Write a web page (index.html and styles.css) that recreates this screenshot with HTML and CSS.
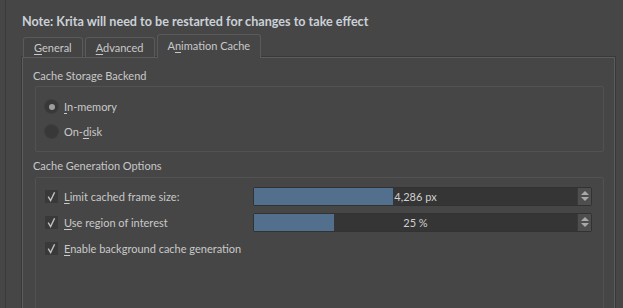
FILE: index.html
```html
<!DOCTYPE html>
<html>
<head>
<meta charset="utf-8">
<link rel="stylesheet" href="styles.css">
</head>
<body>
<div class="dialog">
  <div class="note">Note: Krita will need to be restarted for changes to take effect</div>
  <div class="tabbar">
    <div class="tab"><u>G</u>eneral</div>
    <div class="tab"><u>A</u>dvanced</div>
    <div class="tab active">A<u>n</u>imation Cache</div>
  </div>
  <div class="pane">
    <div class="group">
      <div class="group-title">Cache Storage Backend</div>
      <div class="frame frame-storage">
        <div class="opt"><span class="radio checked"></span><span><u>I</u>n-memory</span></div>
        <div class="opt"><span class="radio"></span><span>On-<u>d</u>isk</span></div>
      </div>
    </div>
    <div class="group">
      <div class="group-title">Cache Generation Options</div>
      <div class="frame frame-gen">
        <div class="row">
          <div class="opt"><span class="check"><svg viewBox="0 0 13 13" width="13" height="13"><path d="M3.2 6.6 L5.6 10.6 L9.6 2.2" fill="none" stroke="#c2c2c2" stroke-width="1.4"/></svg></span><span><u>L</u>imit cached frame size:</span></div>
          <div class="spin">
            <div class="spin-field">
              <div class="spin-fill" style="width:139px"></div>
              <span class="spin-text">4,286 px</span>
            </div>
            <div class="spin-btns"><span class="up"></span><span class="down"></span></div>
          </div>
        </div>
        <div class="row">
          <div class="opt"><span class="check"><svg viewBox="0 0 13 13" width="13" height="13"><path d="M3.2 6.6 L5.6 10.6 L9.6 2.2" fill="none" stroke="#c2c2c2" stroke-width="1.4"/></svg></span><span><u>U</u>se region of interest</span></div>
          <div class="spin">
            <div class="spin-field">
              <div class="spin-fill" style="width:80px"></div>
              <span class="spin-text">25 %</span>
            </div>
            <div class="spin-btns"><span class="up"></span><span class="down"></span></div>
          </div>
        </div>
        <div class="row row-full">
          <div class="opt"><span class="check"><svg viewBox="0 0 13 13" width="13" height="13"><path d="M3.2 6.6 L5.6 10.6 L9.6 2.2" fill="none" stroke="#c2c2c2" stroke-width="1.4"/></svg></span><span><u>E</u>nable background cache generation</span></div>
        </div>
      </div>
    </div>
  </div>
</div>
</body>
</html>
```
FILE: styles.css
```css
html, body {
  margin: 0;
  padding: 0;
  background: #464646;
  height: 308px;
  overflow: hidden;
}
body {
  font-family: Lato, "Open Sans", sans-serif;
  font-size: 11px;
  color: #c9c9c9;
}
u {
  text-decoration: underline;
  text-underline-offset: 2px;
}
.dialog {
  margin-left: 5px;
  border-left: 1px solid #3a3a3a;
  height: 308px;
  box-sizing: border-box;
  padding: 14px 8px 0 16px;
}
.note {
  font-weight: bold;
  font-size: 12.6px;
  line-height: 16px;
  height: 16px;
  color: #cbd1d8;
  margin-bottom: 4px;
  white-space: nowrap;
}
.tabbar {
  display: flex;
  align-items: flex-end;
  gap: 2px;
  height: 23px;
  position: relative;
  z-index: 1;
}
.tab {
  box-sizing: border-box;
  height: 20px;
  line-height: 19px;
  padding: 0 10px 0 10px;
  border: 1px solid #5a5a5a;
  border-bottom: none;
  border-radius: 3px 3px 0 0;
  background: #444444;
  color: #c8c8c8;
}
.tab:first-child {
  margin-left: 1px;
}
.tab.active {
  height: 24px;
  line-height: 22px;
  background: #464646;
  margin-bottom: -1px;
}
.pane {
  border: 1px solid #5c5c5c;
  box-shadow: 0 0 0 1px #393939;
  height: 300px;
  box-sizing: border-box;
  padding: 10px 10px 0 10px;
}
.group-title {
  line-height: 16px;
  height: 16px;
  color: #c8c8c8;
}
.frame {
  border: 1px solid #525252;
  border-radius: 2px;
  margin: 2px 0 0 2px;
}
.frame-storage {
  padding: 7px 9px;
}
.group + .group {
  margin-top: 6px;
}
.group + .group .frame {
  margin-top: 3px;
}
.frame-gen {
  padding: 5px 11px 0 9px;
  height: 200px;
}
.opt {
  display: flex;
  align-items: center;
  gap: 6px;
  height: 25px;
  color: #c9c9c9;
  white-space: nowrap;
}
.radio {
  width: 13px;
  height: 13px;
  border-radius: 50%;
  background: #383838;
  box-shadow: 0 0 0 1px #3e3e3e;
  display: flex;
  align-items: center;
  justify-content: center;
}
.radio.checked::after {
  content: "";
  width: 6px;
  height: 6px;
  border-radius: 50%;
  background: #9e9e9e;
}
.row {
  display: grid;
  grid-template-columns: 208px 1fr;
  align-items: center;
  height: 26px;
}
.row-full {
  grid-template-columns: 1fr;
}
.row .opt {
  height: 26px;
}
.check {
  width: 13px;
  height: 13px;
  background: #393939;
  display: block;
}
.check svg {
  display: block;
}
.spin {
  display: flex;
  height: 19px;
  border: 1px solid #323232;
  border-radius: 2px;
  background: #353535;
  box-sizing: border-box;
}
.spin-field {
  flex: 1;
  position: relative;
  display: flex;
  align-items: center;
  justify-content: center;
}
.spin-fill {
  position: absolute;
  left: 0;
  top: 0;
  bottom: 0;
  background: #52708e;
}
.spin-text {
  position: relative;
  color: #d0d0d0;
}
.spin-btns {
  width: 13px;
  background: #4e4e4e;
  border-left: 1px solid #3a3a3a;
  display: flex;
  flex-direction: column;
  align-items: center;
  justify-content: center;
  gap: 2px;
}
.up, .down {
  width: 0;
  height: 0;
  border-left: 4px solid transparent;
  border-right: 4px solid transparent;
}
.up { border-bottom: 4px solid #a9a9a9; }
.down { border-top: 4px solid #a9a9a9; }
```
